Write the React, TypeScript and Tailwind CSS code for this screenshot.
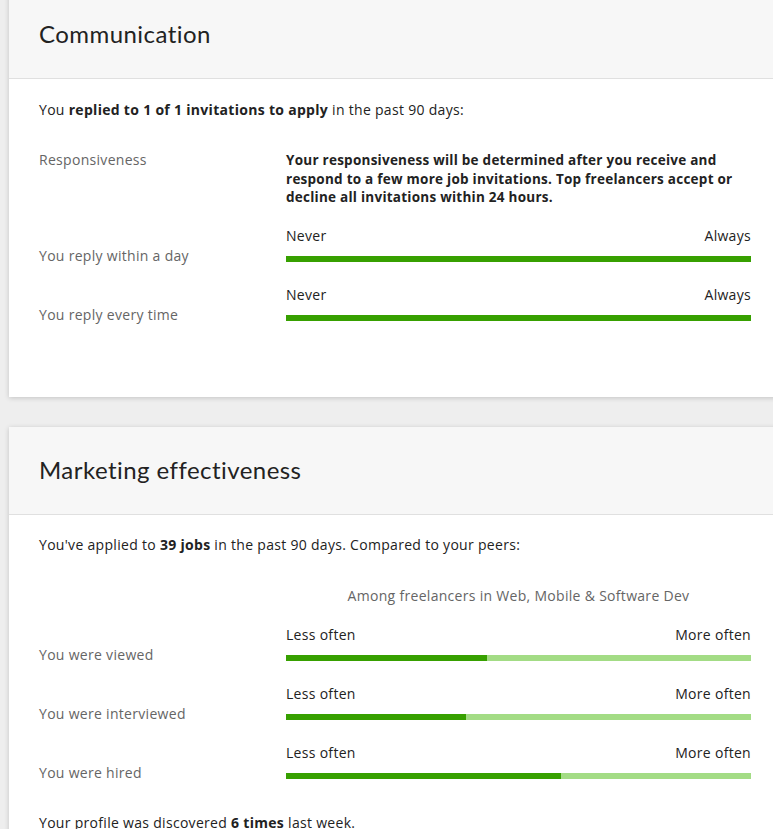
const font = { fontFamily: '"Open Sans", "Liberation Sans", sans-serif' };

type BarRowProps = {
  label: string;
  left: string;
  right: string;
  pct: number;
  full?: boolean;
};

const BarRow = ({ label, left, right, pct, full }: BarRowProps) => (
  <div className="grid grid-cols-[247px_465px] items-end">
    <div className="text-[14px] tracking-[0.3px] leading-5 text-[#656565] mb-[-4px]">{label}</div>
    <div>
      <div className="flex justify-between text-[14px] tracking-[0.3px] leading-5 text-[#222]">
        <span>{left}</span>
        <span>{right}</span>
      </div>
      <div className="mt-[10px] h-[6px] flex bg-[#a3dc85]">
        <div className="h-full bg-[#37a000]" style={{ width: full ? "100%" : `${pct}%` }} />
      </div>
    </div>
  </div>
);

const CardHeader = ({ title }: { title: string }) => (
  <div className="h-[88px] bg-[#f7f7f7] border-b border-[#e0e0e0] flex items-center px-[30px]">
    <h2
      className="text-[24px] leading-7 text-[#222] tracking-[0.45px] mt-[-1px]"
      style={{ fontFamily: '"Lato", "Open Sans", sans-serif' }}
    >
      {title}
    </h2>
  </div>
);

export default function App() {
  return (
    <div className="w-[773px] h-[829px] overflow-hidden bg-[#eeeeee]" style={font}>
      <div className="mt-[-9px] ml-[9px] w-[772px] flex flex-col gap-[30px]">
        <section className="bg-white shadow-[0_1px_5px_rgba(0,0,0,0.18)]">
          <CardHeader title="Communication" />
          <div className="px-[30px] pt-[21px] h-[318px]">
            <p className="text-[14px] tracking-[0.3px] leading-5 text-[#222]">
              You <b>replied to 1 of 1 invitations to apply</b> in the past 90 days:
            </p>
            <div className="mt-[31px] grid grid-cols-[247px_465px]">
              <div className="text-[14px] tracking-[0.3px] leading-[18.5px] text-[#656565]">Responsiveness</div>
              <p className="text-[13.5px] tracking-[0.25px] leading-[18.5px] font-bold text-[#222]">
                Your responsiveness will be determined after you receive and respond to a few more job invitations. Top freelancers accept or decline all invitations within 24 hours.
              </p>
            </div>
            <div className="mt-[19px] flex flex-col gap-[23px]">
              <BarRow label="You reply within a day" left="Never" right="Always" pct={100} full />
              <BarRow label="You reply every time" left="Never" right="Always" pct={100} full />
            </div>
          </div>
        </section>

        <section className="bg-white shadow-[0_1px_5px_rgba(0,0,0,0.18)]">
          <CardHeader title="Marketing effectiveness" />
          <div className="px-[30px] pt-[20px] pb-[30px]">
            <p className="text-[14px] tracking-[0.3px] leading-5 text-[#222]">
              You've applied to <b>39 jobs</b> in the past 90 days. Compared to your peers:
            </p>
            <div className="mt-[31px] grid grid-cols-[247px_465px]">
              <div />
              <div className="text-center text-[14px] tracking-[0.3px] leading-5 text-[#656565]">
                Among freelancers in Web, Mobile &amp; Software Dev
              </div>
            </div>
            <div className="mt-[19px] flex flex-col gap-[23px]">
              <BarRow label="You were viewed" left="Less often" right="More often" pct={43.2} />
              <BarRow label="You were interviewed" left="Less often" right="More often" pct={38.7} />
              <BarRow label="You were hired" left="Less often" right="More often" pct={59.1} />
            </div>
            <p className="mt-[34px] text-[14px] tracking-[0.3px] leading-5 text-[#222]">
              Your profile was discovered <b>6 times</b> last week.
            </p>
          </div>
        </section>
      </div>
    </div>
  );
}
